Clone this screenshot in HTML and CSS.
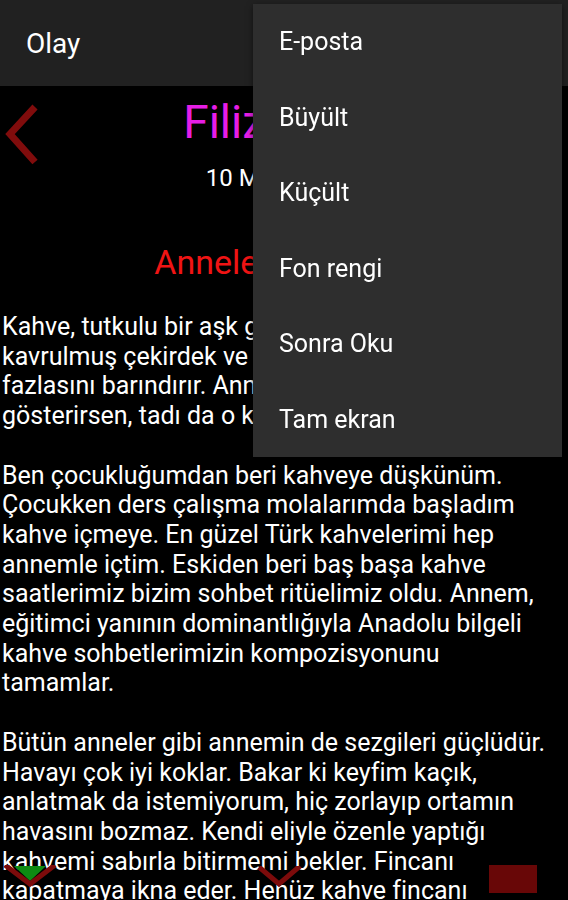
FILE: index.html
```html
<!DOCTYPE html>
<html lang="tr">
<head>
<meta charset="utf-8">
<title>Olay</title>
<link rel="stylesheet" href="styles.css">
</head>
<body>
<header class="toolbar"><span class="toolbar-title">Olay</span></header>
<main class="article">
  <svg class="back" width="40" height="64" viewBox="0 0 40 64"><polyline points="35,10 10,37 35,65" fill="none" stroke="#800c0c" stroke-width="7"/></svg>
  <h1 class="author">Filiz Ertan</h1>
  <div class="date">10 Mayıs 2015</div>
  <h2 class="headline">Anneler ve Kahve</h2>
  <p class="para">Kahve, tutkulu bir aşk gibidir; içinde<br>kavrulmuş çekirdek ve sudan çok daha<br>fazlasını barındırır. Anne sevgisi gibi, ne<br>gösterirsen, tadı da o kadar güzel olur.</p>
  <p class="para">Ben çocukluğumdan beri kahveye düşkünüm.<br>Çocukken ders çalışma molalarımda başladım<br>kahve içmeye. En güzel Türk kahvelerimi hep<br>annemle içtim. Eskiden beri baş başa kahve<br>saatlerimiz bizim sohbet ritüelimiz oldu. Annem,<br>eğitimci yanının dominantlığıyla Anadolu bilgeli<br>kahve sohbetlerimizin kompozisyonunu<br>tamamlar.</p>
  <p class="para">Bütün anneler gibi annemin de sezgileri güçlüdür.<br>Havayı çok iyi koklar. Bakar ki keyfim kaçık,<br>anlatmak da istemiyorum, hiç zorlayıp ortamın<br>havasını bozmaz. Kendi eliyle özenle yaptığı<br>kahvemi sabırla bitirmemi bekler. Fincanı<br>kapatmaya ikna eder. Henüz kahve fincanı<br>soğumadan falına bakmaya başlar.</p>
</main>
<svg class="nav nav-next" width="60" height="30" viewBox="0 0 60 30"><polygon points="13,1 45,1 29,16" fill="#0d8a12"/><polyline points="4,0 29,19 54,0" fill="none" stroke="#7c0b0b" stroke-width="5"/></svg>
<svg class="nav nav-down" width="50" height="30" viewBox="0 0 50 30"><polyline points="2,1 22,18 43,0" fill="none" stroke="#7c0b0b" stroke-width="5"/></svg>
<div class="nav nav-stop"></div>
<nav class="menu">
  <div class="menu-item">E-posta</div>
  <div class="menu-item">Büyült</div>
  <div class="menu-item">Küçült</div>
  <div class="menu-item">Fon rengi</div>
  <div class="menu-item">Sonra Oku</div>
  <div class="menu-item">Tam ekran</div>
</nav>
</body>
</html>
```
FILE: styles.css
```css
html, body {
  margin: 0;
  padding: 0;
  height: 100%;
  overflow: hidden;
  background: #000;
  color: #fff;
  font-family: Roboto, "Noto Sans", sans-serif;
}
.toolbar {
  height: 86px;
  background: #212121;
  display: flex;
  align-items: center;
  padding-left: 26px;
}
.toolbar-title {
  font-size: 28px;
  color: #fff;
}
.article {
  position: relative;
  padding: 8px 2px 0 2px;
}
.back {
  position: absolute;
  left: 0;
  top: 11px;
  overflow: visible;
}
.author {
  margin: 0;
  font-size: 46px;
  font-weight: 400;
  line-height: 56px;
  text-align: center;
  color: #e61ee6;
}
.date {
  margin-top: 13px;
  font-size: 24px;
  line-height: 30px;
  text-align: center;
  color: #fff;
}
.headline {
  margin: 49px 0 0;
  font-size: 34px;
  font-weight: 400;
  line-height: 40px;
  text-align: center;
  color: #f01414;
}
.para {
  margin: 30px 0 0;
  font-size: 25px;
  line-height: 29.7px;
  white-space: nowrap;
  color: #fff;
}
.para + .para {
  margin-top: 29.7px;
}
.nav {
  position: fixed;
}
.nav-next {
  left: 1px;
  top: 865px;
}
.nav-down {
  left: 257px;
  top: 866px;
}
.nav-stop {
  left: 489px;
  top: 865px;
  width: 48px;
  height: 28px;
  background: #680707;
}
.menu {
  position: fixed;
  left: 253px;
  top: 4px;
  width: 309px;
  height: 453px;
  background: #2e2e2e;
  box-shadow: 0 2px 6px rgba(0,0,0,0.5);
  display: flex;
  flex-direction: column;
}
.menu-item {
  height: 75.5px;
  display: flex;
  align-items: center;
  padding-left: 26px;
  font-size: 25px;
  color: #fff;
}
```
